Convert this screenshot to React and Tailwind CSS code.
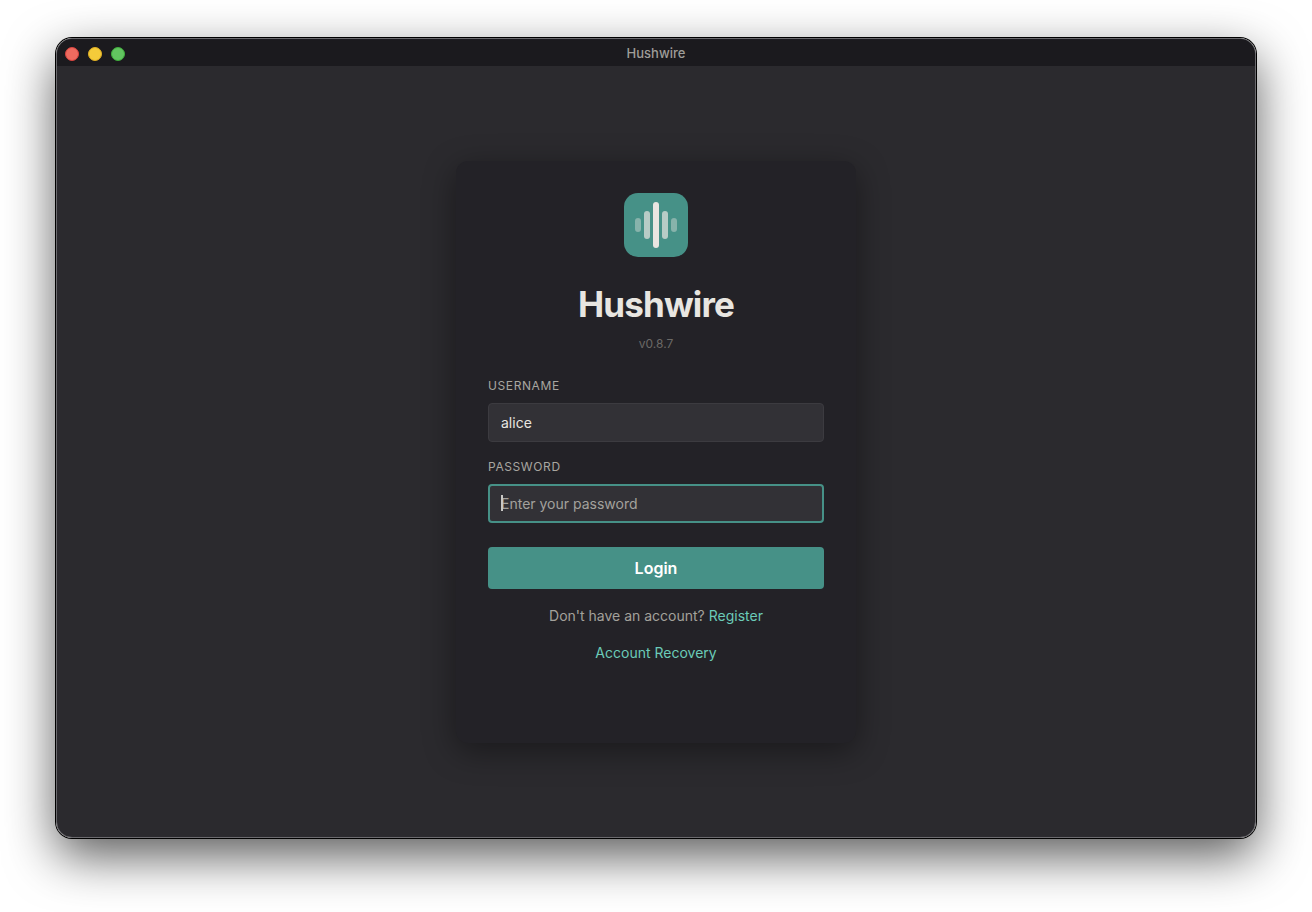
import React, { useState } from 'react';

const LogoMark = () => (
  <svg width="64" height="64" viewBox="0 0 64 64" aria-hidden="true">
    <rect width="64" height="64" rx="14" fill="#469187" />
    <g fill="#e8e6e1">
      <rect x="11" y="25" width="6" height="14" rx="3" opacity="0.4" />
      <rect x="20" y="18" width="6" height="28" rx="3" opacity="0.7" />
      <rect x="29" y="9" width="6" height="46" rx="3" />
      <rect x="38" y="18" width="6" height="28" rx="3" opacity="0.7" />
      <rect x="47" y="25" width="6" height="14" rx="3" opacity="0.4" />
    </g>
  </svg>
);

const TitleBar = () => (
  <header className="grid h-[27px] grid-cols-3 items-center bg-[#1b1a1e] px-2">
    <div className="flex gap-[9px] pt-[3px]">
      <button type="button" aria-label="Close" className="size-3.5 rounded-full border border-[#d9443f] bg-[#ed6a5f]" />
      <button type="button" aria-label="Minimize" className="size-3.5 rounded-full border border-[#dfaf24] bg-[#f4cb3a]" />
      <button type="button" aria-label="Zoom" className="size-3.5 rounded-full border border-[#3fae3c] bg-[#62c460]" />
    </div>
    <p className="text-center text-[13px] leading-5 font-medium text-[#9f9d99]">Hushwire</p>
  </header>
);

const labelStyle = 'mb-[9px] block text-xs leading-4 tracking-wider text-[#a8a6a0]';

const LoginCard = () => {
  const [username, setUsername] = useState('alice');
  const [password, setPassword] = useState('');

  return (
    <form
      onSubmit={(e) => e.preventDefault()}
      className="w-full max-w-[400px] rounded-xl bg-[#232227] px-8 pt-8 pb-20 shadow-[0_8px_32px_rgba(0,0,0,0.4)]"
    >
      <div className="flex flex-col items-center">
        <LogoMark />
        <h1 className="mt-[25px] text-[35px] leading-11 font-bold tracking-tight text-[#e8e6e1]">Hushwire</h1>
        <p className="mt-2.5 text-xs leading-4 text-[#6b6966]">v0.8.7</p>
      </div>

      <div className="mt-[26px]">
        <label htmlFor="username" className={labelStyle}>USERNAME</label>
        <input
          id="username"
          type="text"
          value={username}
          onChange={(e) => setUsername(e.target.value)}
          className="block h-[39px] w-full rounded border border-[#3c3b40] bg-[#323136] px-3 text-sm text-[#e8e6e1] outline-none"
        />
      </div>

      <div className="mt-[17px]">
        <label htmlFor="password" className={labelStyle}>PASSWORD</label>
        <div className="relative">
          <input
            id="password"
            type="password"
            placeholder="Enter your password"
            value={password}
            onChange={(e) => setPassword(e.target.value)}
            className="block h-[39px] w-full rounded border-2 border-[#469187] bg-[#323136] px-[11px] text-sm text-[#e8e6e1] caret-transparent outline-none placeholder:text-[#a3a19d]"
          />
          {password === '' && <span className="absolute top-[11px] left-[13px] h-4 w-0.5 bg-[#c9c8c5]" />}
        </div>
      </div>

      <button type="submit" className="mt-6 block h-[42px] w-full rounded bg-[#469187] text-base font-semibold text-white">
        Login
      </button>

      <p className="mt-[17px] text-center text-sm text-[#a3a19b]">
        Don't have an account? <a href="#register" className="text-[#6bcbb8]">Register</a>
      </p>
      <p className="mt-[17px] text-center text-sm">
        <a href="#recovery" className="text-[#6bcbb8]">Account Recovery</a>
      </p>
    </form>
  );
};

export default function App() {
  return (
    <div className="flex min-h-screen bg-white px-14 pt-[38px] pb-[74px] font-[Inter,sans-serif]">
      <div className="flex flex-1 rounded-2xl shadow-[0_0_0_1px_#000,0_18px_50px_rgba(0,0,0,0.65)]">
        <div className="flex flex-1 flex-col overflow-hidden rounded-2xl border border-[#6b6a6e] bg-[#2b2a2e]">
          <TitleBar />
          <main className="flex flex-1 items-center justify-center">
            <LoginCard />
          </main>
        </div>
      </div>
    </div>
  );
}
